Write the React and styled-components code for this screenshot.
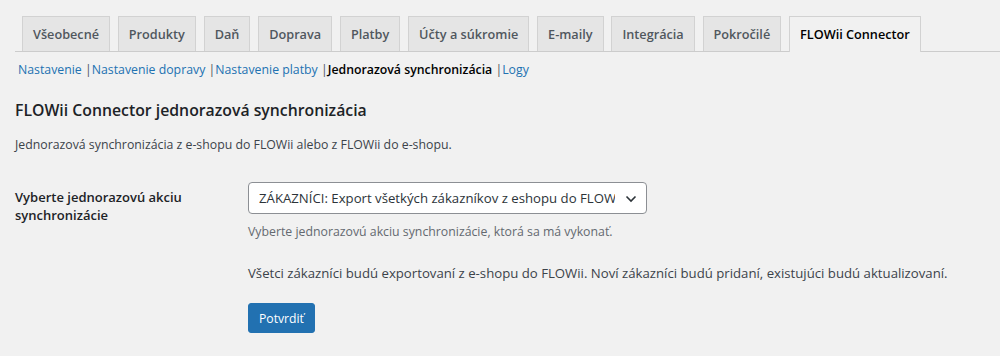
import React from "react";
import styled, { createGlobalStyle } from "styled-components";

const Global = createGlobalStyle`
  html, body { margin: 0; padding: 0; background: #f1f1f1; }
  body { font-family: "Open Sans", "Noto Sans", sans-serif; color: #1d2327; }
`;

const Page = styled.div`
  padding: 16px 0 0 15px;
  width: 985px;
  height: 340px;
  overflow: hidden;
`;

const TabBar = styled.nav`
  display: flex;
  gap: 7.8px;
  padding-left: 7px;
  border-bottom: 1px solid #cccccc;
`;

const Tab = styled.a`
  display: block;
  padding: 5px 10px;
  line-height: 24px;
  font-size: 12.7px;
  font-weight: 600;
  text-decoration: none;
  border: 1px solid #d2d2d2;
  border-bottom: none;
  margin-bottom: ${(p) => (p.$active ? "-1px" : "0")};
  background: ${(p) => (p.$active ? "#f1f1f1" : "#e5e5e5")};
  color: ${(p) => (p.$active ? "#000" : "#50575e")};
  padding-bottom: ${(p) => (p.$active ? "6px" : "5px")};
  white-space: nowrap;
`;

const SubNav = styled.ul`
  display: flex;
  list-style: none;
  margin: 8px 0 0 3px;
  padding: 0;
  font-size: 12.3px;
  line-height: 20px;
  color: #50575e;
`;

const SubItem = styled.li`
  white-space: pre;
`;

const SubLink = styled.a`
  color: ${(p) => (p.$current ? "#000" : "#2271b1")};
  font-weight: ${(p) => (p.$current ? 600 : 400)};
  text-decoration: none;
`;

const Title = styled.h2`
  margin: 18px 0 0;
  font-size: 15.8px;
  line-height: 24px;
  font-weight: 600;
  color: #1d2327;
`;

const Desc = styled.p`
  margin: 13px 0 0;
  font-size: 12.3px;
  line-height: 20px;
  color: #3c434a;
`;

const FormRow = styled.div`
  display: grid;
  grid-template-columns: 233px 1fr;
  margin-top: 27px;
`;

const Label = styled.label`
  padding-top: 6px;
  font-size: 13px;
  line-height: 18px;
  font-weight: 600;
  color: #1d2327;
  width: 190px;
`;

const Field = styled.div`
  display: flex;
  flex-direction: column;
  align-items: flex-start;
`;

const SelectBox = styled.div`
  position: relative;
  box-sizing: border-box;
  width: 399px;
  height: 32px;
  border: 1px solid #8c8f94;
  border-radius: 4px;
  background: #fff;
  display: flex;
  align-items: center;
  padding: 0 31px 0 10px;
  font-size: 13.2px;
  color: #2c3338;
`;

const SelectText = styled.span`
  white-space: nowrap;
  overflow: hidden;
`;

const Chevron = styled.svg`
  position: absolute;
  right: 9px;
  top: 12px;
`;

const Help = styled.p`
  margin: 8px 0 0;
  font-size: 12.3px;
  line-height: 20px;
  color: #646970;
`;

const Note = styled.p`
  margin: 21px 0 0;
  font-size: 13.2px;
  line-height: 20px;
  color: #3c434a;
`;

const Button = styled.button`
  margin-top: 20px;
  height: 30px;
  padding: 0 10px;
  font-family: inherit;
  font-size: 12.2px;
  color: #fff;
  background: #2271b1;
  border: 1px solid #2271b1;
  border-radius: 3px;
`;

const tabs = [
  "Všeobecné",
  "Produkty",
  "Daň",
  "Doprava",
  "Platby",
  "Účty a súkromie",
  "E-maily",
  "Integrácia",
  "Pokročilé",
  "FLOWii Connector",
];

const subs = [
  "Nastavenie",
  "Nastavenie dopravy",
  "Nastavenie platby",
  "Jednorazová synchronizácia",
  "Logy",
];

export default function App() {
  return (
    <>
      <Global />
      <Page>
        <TabBar>
          {tabs.map((t, i) => (
            <Tab key={t} $active={i === tabs.length - 1}>
              {t}
            </Tab>
          ))}
        </TabBar>
        <SubNav>
          {subs.map((s, i) => (
            <SubItem key={s}>
              <SubLink $current={i === 3}>{s}</SubLink>
              {i < subs.length - 1 ? " |" : ""}
            </SubItem>
          ))}
        </SubNav>
        <Title>FLOWii Connector jednorazová synchronizácia</Title>
        <Desc>Jednorazová synchronizácia z e-shopu do FLOWii alebo z FLOWii do e-shopu.</Desc>
        <FormRow>
          <Label>Vyberte jednorazovú akciu synchronizácie</Label>
          <Field>
            <SelectBox>
              <SelectText>ZÁKAZNÍCI: Export všetkých zákazníkov z eshopu do FLOWii</SelectText>
              <Chevron width="12" height="8" viewBox="0 0 12 8">
                <path d="M1.5 1.5 L6 6 L10.5 1.5" fill="none" stroke="#2c3338" strokeWidth="1.6" />
              </Chevron>
            </SelectBox>
            <Help>Vyberte jednorazovú akciu synchronizácie, ktorá sa má vykonať.</Help>
            <Note>
              Všetci zákazníci budú exportovaní z e-shopu do FLOWii. Noví zákazníci budú pridaní, existujúci budú aktualizovaní.
            </Note>
            <Button>Potvrdiť</Button>
          </Field>
        </FormRow>
      </Page>
    </>
  );
}
